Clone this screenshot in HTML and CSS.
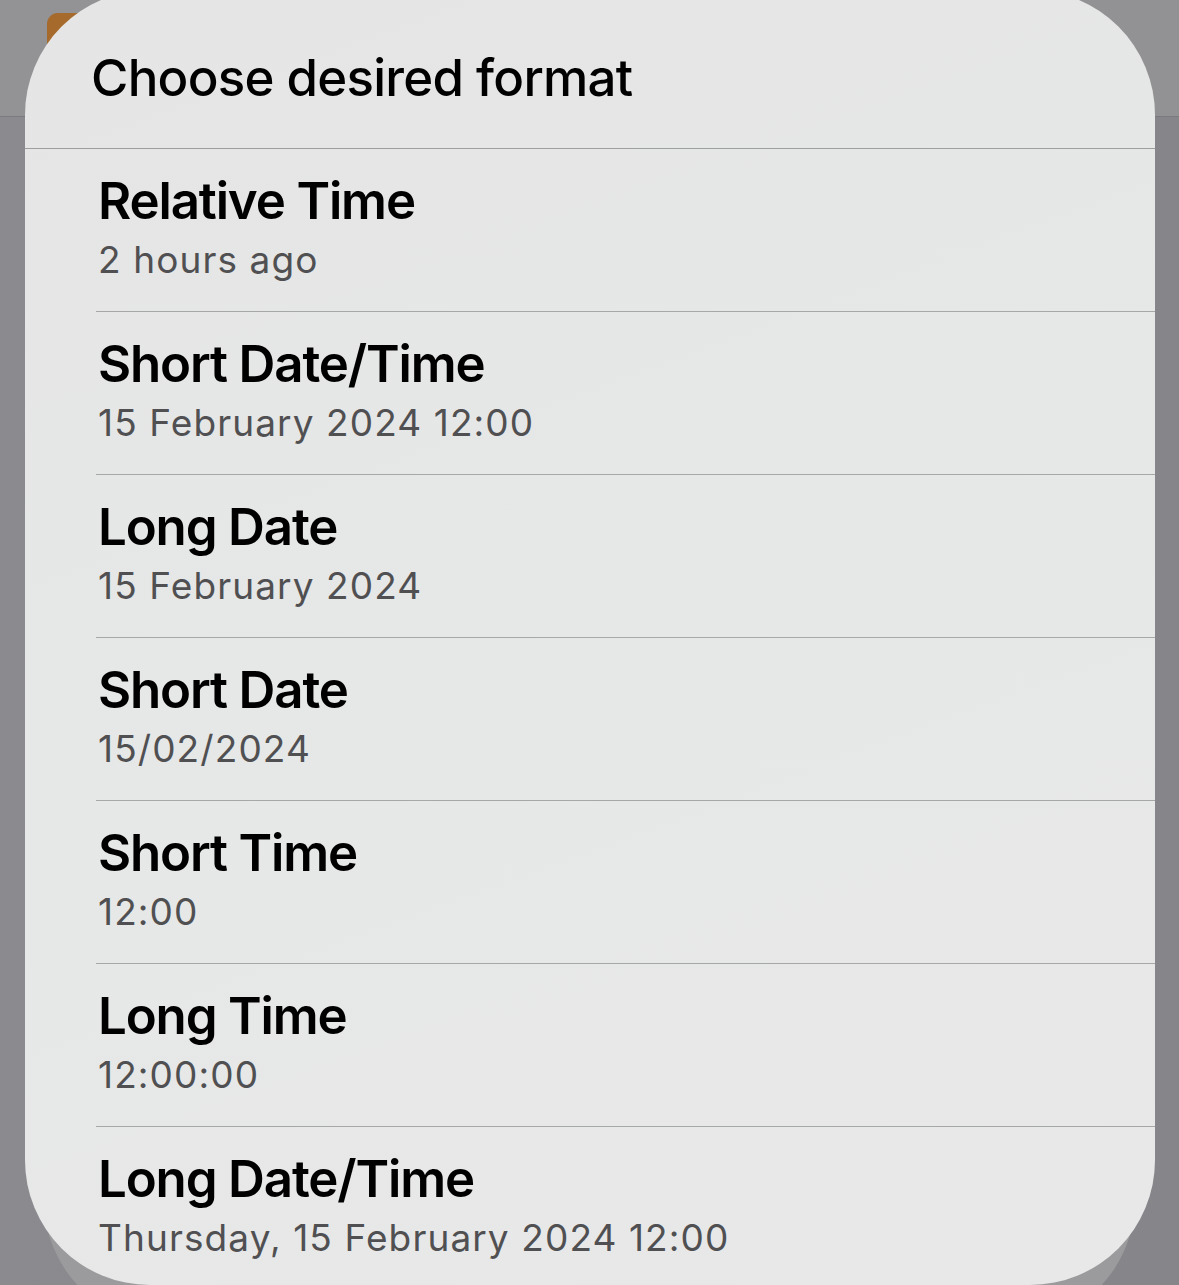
FILE: index.html
```html
<!DOCTYPE html>
<html lang="en">
<head>
<meta charset="utf-8">
<title>Choose desired format</title>
<link rel="stylesheet" href="styles.css">
</head>
<body>
<div class="backdrop">
  <div class="backdrop-top"></div>
  <div class="app-icon"></div>
  <div class="sheet-behind"></div>
  <div class="sheet">
    <div class="sheet-header">Choose desired format</div>
    <ul class="options">
      <li class="option"><div class="option-title">Relative Time</div><div class="option-sub">2 hours ago</div></li>
      <li class="option"><div class="option-title">Short Date/Time</div><div class="option-sub">15 February 2024 12:00</div></li>
      <li class="option"><div class="option-title">Long Date</div><div class="option-sub">15 February 2024</div></li>
      <li class="option"><div class="option-title">Short Date</div><div class="option-sub">15/02/2024</div></li>
      <li class="option"><div class="option-title">Short Time</div><div class="option-sub">12:00</div></li>
      <li class="option"><div class="option-title">Long Time</div><div class="option-sub">12:00:00</div></li>
      <li class="option"><div class="option-title">Long Date/Time</div><div class="option-sub">Thursday, 15 February 2024 12:00</div></li>
    </ul>
  </div>
</div>
</body>
</html>
```

FILE: styles.css
```css
html, body {
  margin: 0;
  padding: 0;
}
body {
  width: 1179px;
  height: 1285px;
  overflow: hidden;
  font-family: Inter, "Noto Sans", "Liberation Sans", sans-serif;
  -webkit-font-smoothing: antialiased;
}
.backdrop {
  position: relative;
  width: 1179px;
  height: 1285px;
  background: linear-gradient(90deg, #8b8b8f 0%, #88888c 50%, #86868a 100%);
  overflow: hidden;
  display: flex;
  flex-direction: column;
}
.backdrop-top {
  position: absolute;
  left: 0;
  top: 0;
  width: 100%;
  height: 116px;
  background: linear-gradient(90deg, #939396 0%, #929294 100%);
  border-bottom: 1px solid #7b7b7f;
}
.app-icon {
  position: absolute;
  left: 47px;
  top: 13px;
  width: 50px;
  height: 50px;
  border-radius: 11px;
  background: #a56a2c;
}
.sheet-behind {
  position: absolute;
  left: 44px;
  right: 44px;
  bottom: -40px;
  height: 300px;
  border-radius: 125px;
  background: #9b9b9d;
}
.sheet {
  position: relative;
  margin: -10px 0 0 25px;
  width: 1130px;
  height: 1300px;
  border-radius: 125px;
  background: linear-gradient(160deg, #e4e5e4 0%, #e6e7e7 45%, #e8e8e9 100%);
  overflow: hidden;
}
.sheet-header {
  padding: 57px 0 39px 66px;
  font-size: 51px;
  line-height: 62px;
  font-weight: 500;
  color: #000;
  letter-spacing: -0.75px;
  border-bottom: 1px solid #9d9e9e;
}
.options {
  list-style: none;
  margin: 0;
  padding: 0 0 0 71px;
}
.option {
  padding: 21px 0 28px 2px;
  border-bottom: 1px solid #a6a7a7;
}
.option-title {
  font-size: 51px;
  line-height: 62px;
  font-weight: 600;
  color: #000;
  letter-spacing: -1.15px;
}
.option-sub {
  margin-top: 5px;
  font-size: 37px;
  line-height: 46px;
  font-weight: 400;
  color: #505052;
  letter-spacing: 1.1px;
}
```
